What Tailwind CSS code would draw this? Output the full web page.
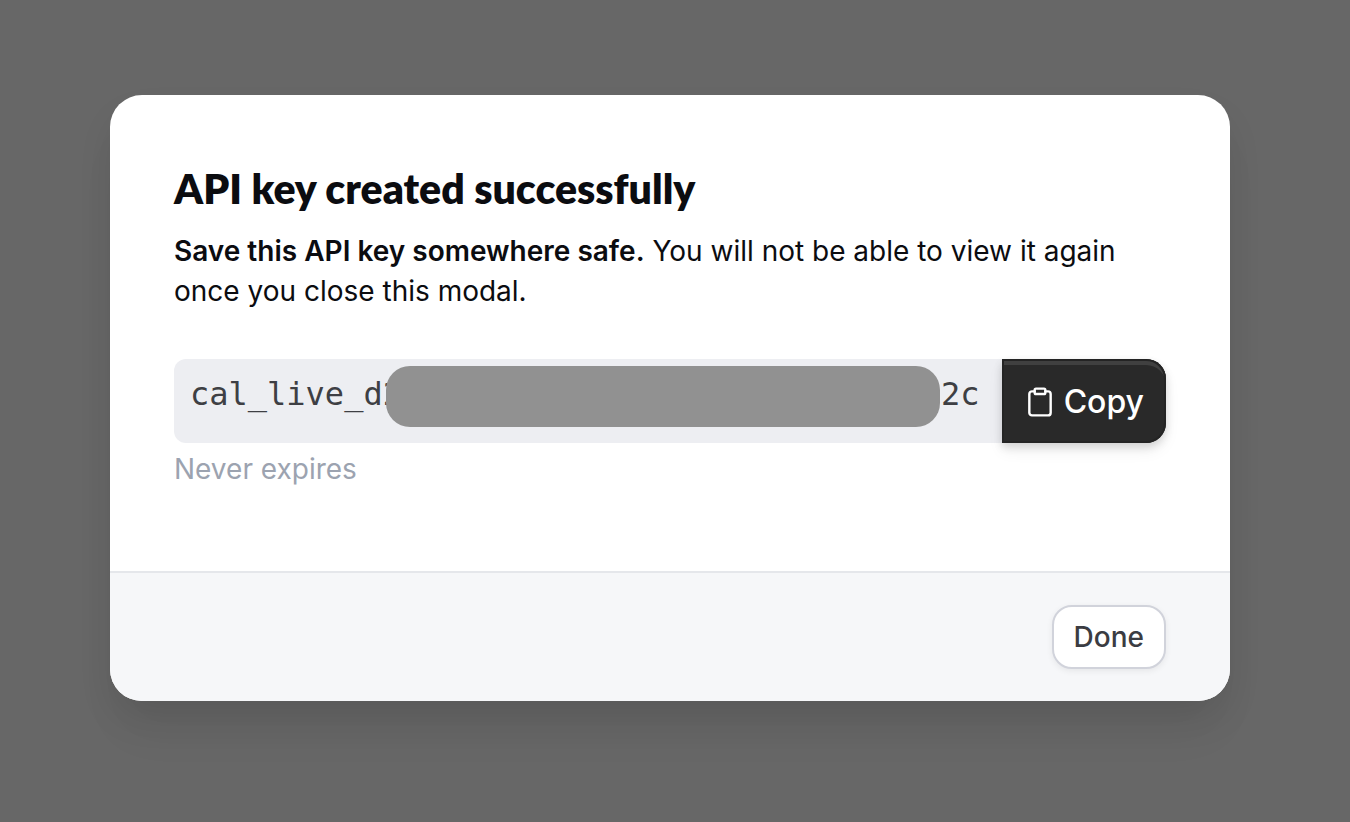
<!DOCTYPE html>
<html lang="en">
  <head>
    <meta charset="UTF-8" />
    <meta name="viewport" content="width=device-width, initial-scale=1.0" />
    <title>API key created</title>
    <script src="https://cdn.jsdelivr.net/npm/@tailwindcss/browser@4"></script>
  </head>
  <body
    class="min-h-screen bg-[#676767] px-[110px] pt-[95px] pb-12 font-['Inter',sans-serif] text-[28px] leading-10 text-[#0b0c10]"
  >
    <main
      role="dialog"
      aria-labelledby="modal-title"
      class="w-full max-w-[1120px] overflow-hidden rounded-[32px] bg-white shadow-[0_40px_50px_-10px_rgba(0,0,0,0.04),0_20px_40px_-8px_rgba(0,0,0,0.12)]"
    >
      <section class="px-16 pt-[70px] pb-[82px]">
        <h1
          id="modal-title"
          class="mb-[18px] font-['Lato',sans-serif] text-[41px] leading-12 font-extrabold"
        >
          API key created successfully
        </h1>
        <p>
          <strong class="font-semibold">Save this API key somewhere safe.</strong>
          You will not be able to view it again once you close this modal.
        </p>

        <div class="mt-12 flex h-21">
          <div
            class="flex flex-1 items-start rounded-l-xl bg-[#edeef2] pt-[7px] pr-[22px] pl-4 font-['DejaVu_Sans_Mono',monospace] text-[32px] leading-14 text-[#3e3f44]"
          >
            <code class="font-[inherit]">cal_live_d2</code>
            <!-- redacted part of the key -->
            <span class="relative mr-px -ml-4 h-[61px] flex-1 rounded-[24px] bg-[#919191]"></span>
            <code class="font-[inherit]">2c</code>
          </div>
          <button
            type="button"
            class="flex items-center gap-2 rounded-r-[20px] bg-[#292929] px-[22px] pt-[2px] text-[32px] font-medium text-white shadow-[inset_0_0_0_2px_#242424,inset_0_6px_0_0_#404040,0_4px_8px_rgba(0,0,0,0.14),0_8px_16px_rgba(0,0,0,0.06)]"
          >
            <svg
              class="size-8"
              viewBox="0 0 24 24"
              fill="none"
              stroke="currentColor"
              stroke-width="1.8"
              stroke-linecap="round"
              stroke-linejoin="round"
              aria-hidden="true"
            >
              <path d="M16 4h2a2 2 0 0 1 2 2v14a2 2 0 0 1-2 2H6a2 2 0 0 1-2-2V6a2 2 0 0 1 2-2h2" />
              <rect x="8" y="2" width="8" height="4" rx="1" />
            </svg>
            Copy
          </button>
        </div>
        <p class="mt-[6px] text-[#9ca3b0]">Never expires</p>
      </section>

      <footer class="flex justify-end border-t-2 border-[#e5e7eb] bg-[#f6f7f9] px-16 py-8">
        <button
          type="button"
          class="h-16 rounded-[20px] border-2 border-[#d1d3db] bg-white px-5 font-medium text-[#3b3c42] shadow-[0_2px_6px_rgba(0,0,0,0.07)]"
        >
          Done
        </button>
      </footer>
    </main>
  </body>
</html>
